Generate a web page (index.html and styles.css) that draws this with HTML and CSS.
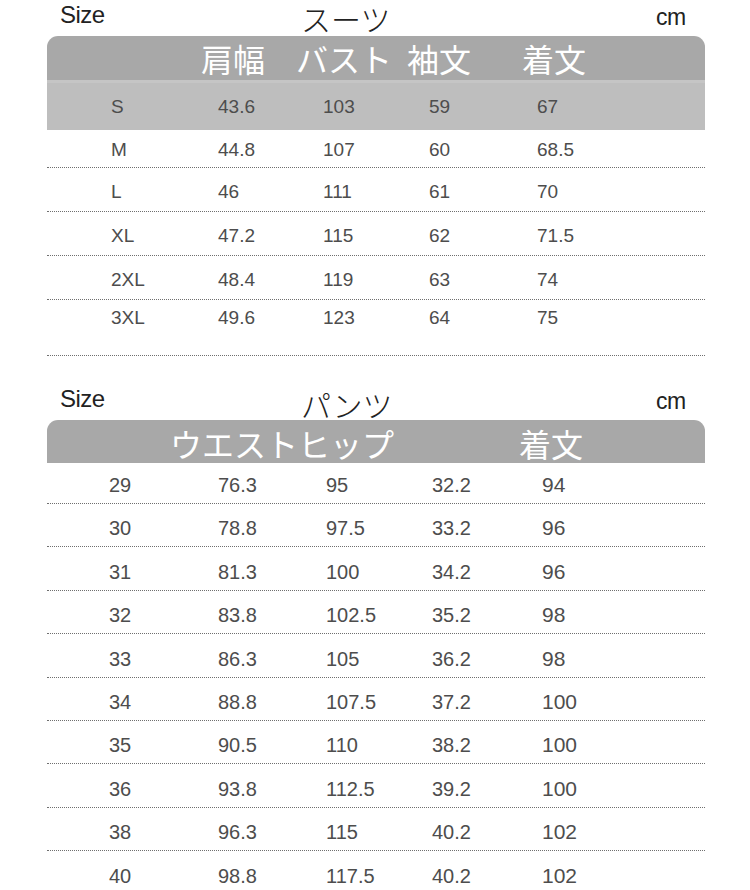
FILE: index.html
```html
<!DOCTYPE html>
<html lang="ja">
<head>
<meta charset="utf-8">
<title>サイズ表</title>
<link rel="stylesheet" href="styles.css">
</head>
<body>
<main class="page">
  <section class="chart">
    <div class="caption">
      <span class="size">Size</span>
      <span class="title">スーツ</span>
      <span class="unit">cm</span>
    </div>
    <div class="head head-suits">
      <span></span><span>肩幅</span><span>バスト</span><span>袖文</span><span>着文</span>
    </div>
    <div class="row row-suits row-hl"><span>S</span><span>43.6</span><span>103</span><span>59</span><span>67</span></div>
    <div class="row row-suits row-m"><span>M</span><span>44.8</span><span>107</span><span>60</span><span>68.5</span></div>
    <div class="row row-suits"><span>L</span><span>46</span><span>111</span><span>61</span><span>70</span></div>
    <div class="row row-suits"><span>XL</span><span>47.2</span><span>115</span><span>62</span><span>71.5</span></div>
    <div class="row row-suits"><span>2XL</span><span>48.4</span><span>119</span><span>63</span><span>74</span></div>
    <div class="row row-suits row-last"><span>3XL</span><span>49.6</span><span>123</span><span>64</span><span>75</span></div>
  </section>

  <section class="chart">
    <div class="caption caption-pants">
      <span class="size">Size</span>
      <span class="title">パンツ</span>
      <span class="unit">cm</span>
    </div>
    <div class="head head-pants">
      <span></span><span>ウエストヒップ</span><span>着文</span>
    </div>
    <div class="row row-pants row-p1"><span>29</span><span>76.3</span><span>95</span><span>32.2</span><span class="big">94</span></div>
    <div class="row row-pants"><span>30</span><span>78.8</span><span>97.5</span><span>33.2</span><span class="big">96</span></div>
    <div class="row row-pants"><span>31</span><span>81.3</span><span>100</span><span>34.2</span><span class="big">96</span></div>
    <div class="row row-pants"><span>32</span><span>83.8</span><span>102.5</span><span>35.2</span><span class="big">98</span></div>
    <div class="row row-pants"><span>33</span><span>86.3</span><span>105</span><span>36.2</span><span class="big">98</span></div>
    <div class="row row-pants"><span>34</span><span>88.8</span><span>107.5</span><span>37.2</span><span class="big">100</span></div>
    <div class="row row-pants"><span>35</span><span>90.5</span><span>110</span><span>38.2</span><span class="big">100</span></div>
    <div class="row row-pants"><span>36</span><span>93.8</span><span>112.5</span><span>39.2</span><span class="big">100</span></div>
    <div class="row row-pants"><span>38</span><span>96.3</span><span>115</span><span>40.2</span><span class="big">102</span></div>
    <div class="row row-pants"><span>40</span><span>98.8</span><span>117.5</span><span>40.2</span><span class="big">102</span></div>
  </section>
</main>
</body>
</html>
```
FILE: styles.css
```css
* { box-sizing: border-box; }

html, body {
  margin: 0;
  padding: 0;
  background: #ffffff;
}

body {
  font-family: "Liberation Sans", "Noto Sans CJK JP", sans-serif;
  color: #222222;
}

.page {
  width: 705px;
  padding-left: 47px;
}

.chart {
  width: 658px;
}

/* caption line: Size / title / cm */
.caption {
  display: flex;
  align-items: flex-start;
  height: 36px;
  padding-left: 13px;
}

.caption-pants {
  height: 64px;
  padding-top: 28px;
}

.size {
  width: 241px;
  margin-top: 2px;
  font-size: 24px;
  line-height: 26px;
  letter-spacing: -0.5px;
  color: #222;
}

.title {
  width: 355px;
  margin-top: 3px;
  font-family: "Noto Sans CJK JP", sans-serif;
  font-weight: 300;
  font-size: 30px;
  line-height: 30px;
  color: #222;
}

.caption-pants .title {
  margin-top: 5px;
}

.unit {
  margin-top: 4px;
  font-size: 23px;
  line-height: 26px;
  letter-spacing: -0.5px;
  color: #222;
}

/* grey header bar */
.head {
  display: grid;
  background: #a8a8a8;
  border-radius: 11px 11px 0 0;
  font-family: "Noto Sans CJK JP", sans-serif;
  font-size: 32px;
  color: #ffffff;
  white-space: nowrap;
}

.head-suits {
  height: 44px;
  line-height: 44px;
  grid-template-columns: 154px 95px 111px 115px 1fr;
}

.head-pants {
  height: 43px;
  padding-top: 3px;
  line-height: 40px;
  grid-template-columns: 123px 349px 1fr;
}

/* data rows */
.row {
  display: grid;
  align-items: end;
  font-size: 19px;
  line-height: 24px;
  color: #4d4d4d;
  border-bottom: 1px dotted #6f6f6f;
}

.row-suits {
  height: 44px;
  padding-left: 64px;
  padding-bottom: 7px;
  grid-template-columns: 107px 105px 106px 108px 1fr;
}

.row-hl {
  height: 50px;
  padding-bottom: 11px;
  background: #bebebe;
  border-top: 3px solid #c5c5c5;
  border-bottom: 0;
}

.row-m {
  height: 38px;
  padding-bottom: 5px;
}

.row-last {
  height: 56px;
  padding-bottom: 25px;
}

.row-pants {
  height: 43.4px;
  padding-left: 62px;
  padding-bottom: 6px;
  font-size: 20px;
  grid-template-columns: 109px 108px 106px 110px 1fr;
}

.row-p1 {
  height: 41px;
}

.big {
  font-size: 21px;
}
```
